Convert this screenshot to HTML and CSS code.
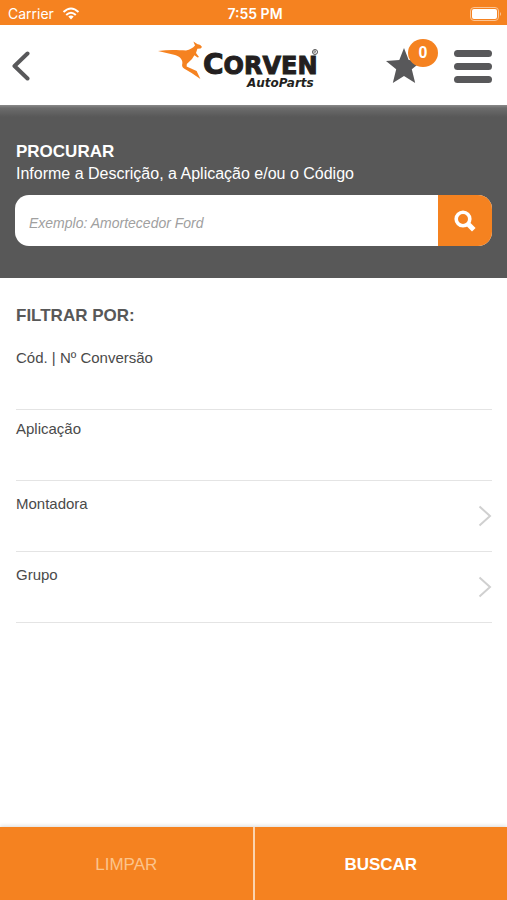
FILE: index.html
```html
<!DOCTYPE html>
<html lang="pt-BR">
<head>
    <meta charset="UTF-8">
    <meta name="viewport" content="width=device-width, initial-scale=1.0">
    <title>Corven AutoParts</title>
    <link rel="stylesheet" href="styles.css">
</head>
<body>
    <!-- Status bar -->
    <div class="status-bar">
        <div class="carrier">
            <span>Carrier</span>
            <svg width="18" height="13" viewBox="0 0 18 13" fill="none" stroke="#fff" stroke-width="2">
                <path d="M1.5 5 Q9 -2 16.5 5"/>
                <path d="M4.2 8 Q9 3.4 13.8 8"/>
                <path d="M6.3 9.6 Q9 7.4 11.7 9.6 L9 12.6 Z" fill="#fff" stroke="none"/>
            </svg>
        </div>
        <span class="time">7:55 PM</span>
        <div class="battery">
            <svg width="32" height="14" viewBox="0 0 32 14">
                <rect x="0.5" y="0.5" width="28" height="13" rx="3.5" fill="none" stroke="#fbc596"/>
                <rect x="2" y="2" width="25" height="10" rx="2" fill="#fff"/>
                <path d="M30 5 Q32 7 30 9 Z" fill="#fbc596"/>
            </svg>
        </div>
    </div>

    <!-- Header -->
    <header class="header">
        <button class="icon-btn back" aria-label="Voltar">
            <svg width="18" height="30" viewBox="0 0 18 30" fill="none" stroke="#58585a" stroke-width="4" stroke-linecap="round" stroke-linejoin="round">
                <path d="M15.5 2.5 L2.5 15 L15.5 27.5"/>
            </svg>
        </button>
        <a href="#" class="logo" aria-label="Corven AutoParts">
            <svg width="162" height="50" viewBox="0 0 162 50">
                <path fill="#f58220" d="M0 10 C10 8.6 20 9 28 9.6 C32 8.6 35 7 37 4.6 L35.4 0.6 L39.6 3.2 C41.5 3.4 43.2 4.2 44 6 L42.6 7.6 L39.4 7.8 L38 12 L41 16 L39.6 16.6 L36.4 14.2 L34 18 L28.8 23 L28.6 25.6 L38.6 30 L42.4 38 L33.6 32 L26 27.4 C23.6 26 24 24 24.4 22 C24.6 18 21 15 16 13.8 Z"/>
                <text x="45" y="33" class="logo-name"><tspan class="logo-initial">C</tspan>ORVEN</text>
                <text x="89" y="46" class="logo-sub">AutoParts</text>
                <circle cx="157" cy="11" r="2.5" fill="none" stroke="#555"/>
                <path d="M156 12.5 V9.8 H157.5 V11 H156.5 L158 12.5" fill="none" stroke="#555" stroke-width="0.6"/>
            </svg>
        </a>
        <div class="header-actions">
            <button class="icon-btn favorites" aria-label="Favoritos">
                <svg width="36" height="36" viewBox="0 0 36 36">
                    <path fill="#58585a" d="M18 0 L22.7 12 L36 12.9 L25.8 21.2 L29.2 35 L18 28 L6.8 35 L10.2 21.2 L0 12.9 L13.3 12 Z"/>
                </svg>
                <span class="badge">0</span>
            </button>
            <button class="icon-btn menu" aria-label="Menu">
                <span class="bar"></span>
                <span class="bar"></span>
                <span class="bar"></span>
            </button>
        </div>
    </header>

    <!-- Search -->
    <section class="search">
        <h1>PROCURAR</h1>
        <label for="search-input">Informe a Descrição, a Aplicação e/ou o Código</label>
        <div class="search-box">
            <input type="text" id="search-input" placeholder="Exemplo: Amortecedor Ford">
            <button class="search-btn" aria-label="Procurar">
                <svg width="22" height="22" viewBox="0 0 22 22" fill="none" stroke="#fff">
                    <circle cx="9" cy="9" r="6.8" stroke-width="3.6"/>
                    <path d="M13.5 13.5 L19.8 19.8" stroke-width="5"/>
                </svg>
            </button>
        </div>
    </section>

    <!-- Filters -->
    <main class="filters">
        <h2>FILTRAR POR:</h2>
        <div class="row">
            <div class="field">
                <label for="codigo">Cód. | Nº Conversão</label>
                <input type="text" id="codigo">
            </div>
        </div>
        <div class="row">
            <div class="field">
                <label for="aplicacao">Aplicação</label>
                <input type="text" id="aplicacao">
            </div>
        </div>
        <div class="row row-select">
            <div class="field">
                <label for="montadora">Montadora</label>
                <select id="montadora">
                    <option value=""></option>
                </select>
            </div>
            <svg width="14" height="22" viewBox="0 0 14 22" fill="none" stroke="#d0d0d0" stroke-width="2">
                <path d="M1.5 1.5 L12 11 L1.5 20.5"/>
            </svg>
        </div>
        <div class="row row-select">
            <div class="field">
                <label for="grupo">Grupo</label>
                <select id="grupo">
                    <option value=""></option>
                </select>
            </div>
            <svg width="14" height="22" viewBox="0 0 14 22" fill="none" stroke="#d0d0d0" stroke-width="2">
                <path d="M1.5 1.5 L12 11 L1.5 20.5"/>
            </svg>
        </div>
    </main>

    <!-- Bottom buttons -->
    <footer class="footer">
        <button class="clear">LIMPAR</button>
        <button class="submit">BUSCAR</button>
    </footer>
</body>
</html>
```
FILE: styles.css
```css
* {
    margin: 0;
    padding: 0;
    box-sizing: border-box;
}

body {
    min-height: 100vh;
    display: flex;
    flex-direction: column;
    background: #fff;
    color: #4a4a4a;
    font-family: "Liberation Sans", Arial, sans-serif;
}

button, input, select {
    border: none;
    background: none;
    font-family: inherit;
}

button {
    cursor: pointer;
}

svg {
    display: block;
}

/* Status bar */
.status-bar {
    display: grid;
    grid-template-columns: 1fr auto 1fr;
    align-items: center;
    height: 25px;
    padding: 2px 5px 0 8px;
    background: #f58220;
    color: #fff;
    font-family: Inter, sans-serif;
    font-size: 14px;
}

.carrier {
    display: flex;
    align-items: center;
    gap: 8px;
}

.time {
    font-weight: 600;
}

.battery {
    display: flex;
    justify-content: flex-end;
}

/* Header */
.header {
    display: grid;
    grid-template-columns: 1fr auto 1fr;
    align-items: center;
    height: 80px;
    padding: 2px 15px 0 12px;
    background: #fff;
}

.icon-btn {
    position: relative;
}

.back {
    justify-self: start;
}

.logo {
    margin-right: 26px;
}

.logo-name {
    font-family: "DejaVu Sans", sans-serif;
    font-size: 24px;
    font-weight: bold;
    fill: #231f20;
    stroke: #231f20;
    stroke-width: 1px;
}

.logo-initial {
    font-size: 28px;
}

.logo-sub {
    font-family: "DejaVu Sans", sans-serif;
    font-size: 12px;
    font-weight: bold;
    font-style: italic;
    fill: #231f20;
}

.header-actions {
    display: flex;
    align-items: center;
    justify-content: flex-end;
    gap: 32px;
}

.badge {
    position: absolute;
    top: -9px;
    right: -16px;
    width: 30px;
    height: 28px;
    border-radius: 50%;
    background: #f58220;
    color: #fff;
    font-size: 16px;
    font-weight: bold;
    line-height: 28px;
    text-align: center;
}

.menu {
    display: flex;
    flex-direction: column;
    gap: 6px;
}

.bar {
    width: 38px;
    height: 7px;
    border-radius: 4px;
    background: #58585a;
}

/* Search */
.search {
    padding: 36px 15px 32px;
    background: linear-gradient(#8a8a8a, #6c6c6c 3px, #585858 12px);
    color: #fff;
}

.search h1 {
    padding-left: 1px;
    font-size: 17px;
    line-height: 22px;
}

.search label {
    display: block;
    padding-left: 1px;
    font-size: 16px;
    line-height: 22px;
}

.search-box {
    display: flex;
    height: 51px;
    margin-top: 10px;
    border-radius: 14px;
    background: #fff;
    overflow: hidden;
}

.search-box input {
    flex: 1;
    min-width: 0;
    padding: 4px 14px 0;
    color: #4a4a4a;
    font-size: 14px;
}

.search-box input::placeholder {
    color: #a0a0a0;
    font-style: italic;
}

.search-btn {
    display: flex;
    align-items: center;
    justify-content: center;
    width: 54px;
    background: #f58220;
}

/* Filters */
.filters {
    flex: 1;
    padding: 27px 15px 0 16px;
}

.filters h2 {
    margin-bottom: 12px;
    color: #585858;
    font-size: 17px;
    line-height: 22px;
}

.row {
    display: flex;
    align-items: center;
    height: 71px;
    border-bottom: 1px solid #e4e4e4;
}

.field {
    flex: 1;
    align-self: stretch;
    display: flex;
    flex-direction: column;
    padding-top: 10px;
}

.row-select .field {
    padding-top: 14px;
}

.field label {
    font-size: 15px;
    line-height: 18px;
}

.field input, .field select {
    flex: 1;
    min-height: 0;
    width: 100%;
    color: #4a4a4a;
    font-size: 15px;
    appearance: none;
}

/* Bottom buttons */
.footer {
    display: flex;
    height: 73px;
    background: #f58220;
    box-shadow: 0 -1px 4px rgba(0, 0, 0, 0.15);
}

.footer button {
    flex: 1;
    padding-top: 2px;
    color: #fff;
    font-size: 17px;
}

.footer .clear {
    border-right: 2px solid #fbd3ae;
    color: #fcc48c;
}

.footer .submit {
    font-weight: bold;
}
```
